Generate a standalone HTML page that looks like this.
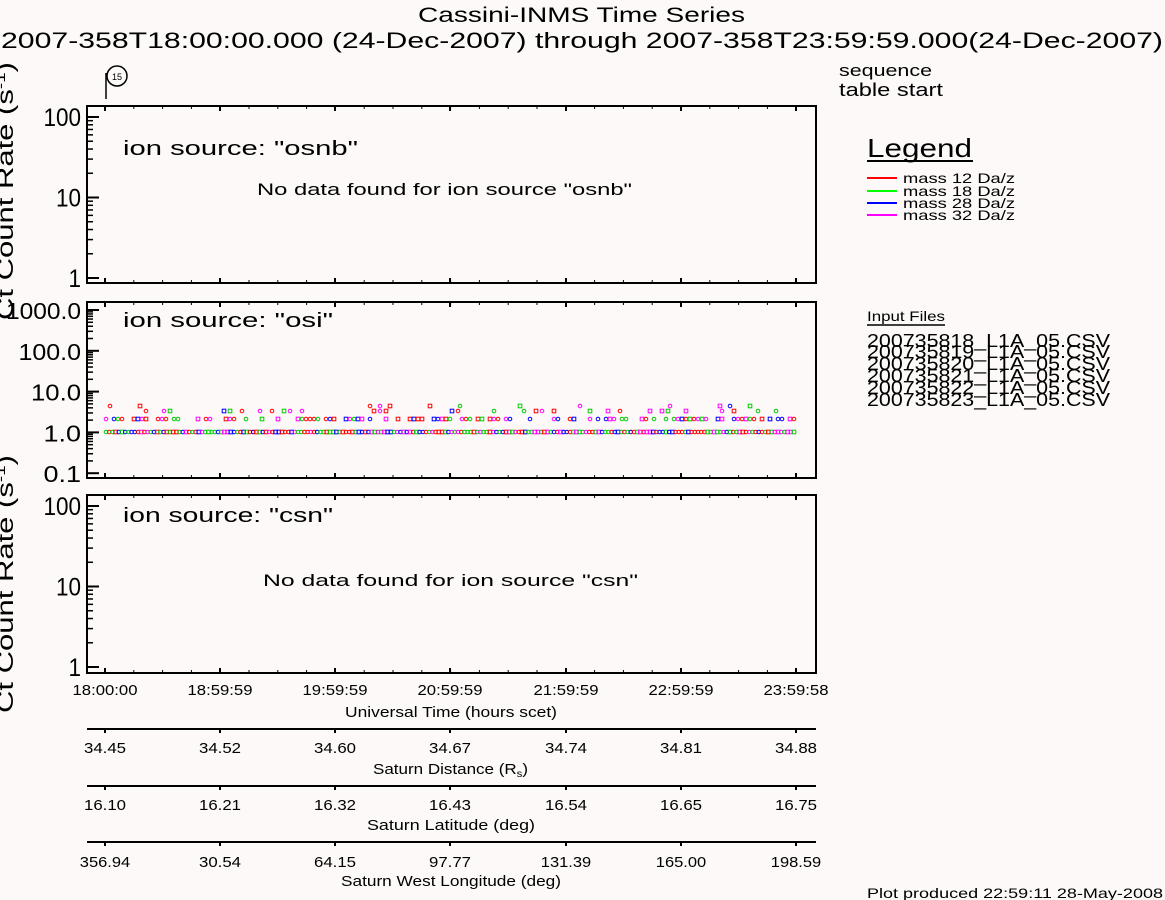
<!DOCTYPE html>
<html><head><meta charset="utf-8"><style>
html,body{margin:0;padding:0;background:#fcf9f8;}
svg{display:block;font-family:"Liberation Sans",sans-serif;}
</style></head><body>
<svg id="s" width="1165" height="900" xmlns="http://www.w3.org/2000/svg">
<rect width="1165" height="900" fill="#fcf9f8"/>
<text x="418" y="22" font-size="21" textLength="327" lengthAdjust="spacingAndGlyphs">Cassini-INMS Time Series</text>
<text x="1" y="48" font-size="22" textLength="1162" lengthAdjust="spacingAndGlyphs">2007-358T18:00:00.000 (24-Dec-2007) through 2007-358T23:59:59.000(24-Dec-2007)</text>
<text transform="translate(13,320) rotate(-90)" font-size="23" textLength="258" lengthAdjust="spacingAndGlyphs">Ct Count Rate (s<tspan dy="-8" font-size="14">-1</tspan><tspan dy="8">)</tspan></text>
<text transform="translate(13,713) rotate(-90)" font-size="23" textLength="258" lengthAdjust="spacingAndGlyphs">Ct Count Rate (s<tspan dy="-8" font-size="14">-1</tspan><tspan dy="8">)</tspan></text>
<line x1="106" y1="99" x2="106" y2="73" stroke="#000" stroke-width="1.5"/>
<circle cx="117" cy="76" r="10" fill="none" stroke="#000" stroke-width="1.5"/>
<text x="117" y="80" font-size="9" text-anchor="middle">15</text>
<text x="839" y="76" font-size="17" textLength="93" lengthAdjust="spacingAndGlyphs">sequence</text>
<text x="839" y="96" font-size="18" textLength="104" lengthAdjust="spacingAndGlyphs">table start</text>
<text x="867" y="157" font-size="26" textLength="105" lengthAdjust="spacingAndGlyphs">Legend</text>
<line x1="867" y1="161" x2="973" y2="161" stroke="#000" stroke-width="2"/>
<g font-size="14">
<line x1="867" y1="178" x2="897" y2="178" stroke="#f00" stroke-width="2"/><text x="903" y="183" textLength="112" lengthAdjust="spacingAndGlyphs">mass 12 Da/z</text>
<line x1="867" y1="191" x2="897" y2="191" stroke="#0f0" stroke-width="2"/><text x="903" y="196" textLength="112" lengthAdjust="spacingAndGlyphs">mass 18 Da/z</text>
<line x1="867" y1="203" x2="897" y2="203" stroke="#00f" stroke-width="2"/><text x="903" y="208" textLength="112" lengthAdjust="spacingAndGlyphs">mass 28 Da/z</text>
<line x1="867" y1="215" x2="897" y2="215" stroke="#f0f" stroke-width="2"/><text x="903" y="220" textLength="112" lengthAdjust="spacingAndGlyphs">mass 32 Da/z</text>
</g>
<text x="867" y="321" font-size="14" textLength="78" lengthAdjust="spacingAndGlyphs">Input Files</text>
<line x1="867" y1="325" x2="945" y2="325" stroke="#000" stroke-width="1.5"/>
<g font-size="18">
<text x="867" y="347" textLength="243" lengthAdjust="spacingAndGlyphs">200735818_L1A_05.CSV</text>
<text x="867" y="358" textLength="243" lengthAdjust="spacingAndGlyphs">200735819_L1A_05.CSV</text>
<text x="867" y="370" textLength="243" lengthAdjust="spacingAndGlyphs">200735820_L1A_05.CSV</text>
<text x="867" y="382" textLength="243" lengthAdjust="spacingAndGlyphs">200735821_L1A_05.CSV</text>
<text x="867" y="394" textLength="243" lengthAdjust="spacingAndGlyphs">200735822_L1A_05.CSV</text>
<text x="867" y="406" textLength="243" lengthAdjust="spacingAndGlyphs">200735823_L1A_05.CSV</text>
</g>
<g id="plots"></g>
<g stroke="#000" stroke-width="2">
<line x1="87" y1="729" x2="816" y2="729"/><line x1="87" y1="786" x2="816" y2="786"/><line x1="87" y1="842" x2="816" y2="842"/>
</g>
<g id="ax"></g>
<text x="373" y="774" font-size="15" textLength="155" lengthAdjust="spacingAndGlyphs">Saturn Distance (R<tspan font-size="10" dy="3">s</tspan><tspan dy="-3">)</tspan></text>
<text x="1163" y="898" font-size="14" text-anchor="end" textLength="296" lengthAdjust="spacingAndGlyphs">Plot produced 22:59:11 28-May-2008</text>
</svg>
<script>
var NS="http://www.w3.org/2000/svg",g=document.getElementById("plots");
function el(t,a,p){var e=document.createElementNS(NS,t);for(var k in a)e.setAttribute(k,a[k]);(p||g).appendChild(e);return e;}
function txt(x,y,s,sz,anc,len,p){var a={x:x,y:y,"font-size":sz,"text-anchor":anc||"start"};if(len){a.textLength=len;a.lengthAdjust="spacingAndGlyphs";}var e=el("text",a,p);e.textContent=s;return e;}
var X0=87,X1=816,hx=[105,220,335,450,566,681,796];
function frame(y0,y1){
 el("rect",{x:X0,y:y0,width:X1-X0,height:y1-y0,fill:"none",stroke:"#000","stroke-width":2});
 for(var i=0;i<hx.length;i++){el("line",{x1:hx[i],y1:y0,x2:hx[i],y2:y0+5,stroke:"#000","stroke-width":2});el("line",{x1:hx[i],y1:y1,x2:hx[i],y2:y1-5,stroke:"#000","stroke-width":2});}
 for(var x=105;x<=800;x+=28.8){el("line",{x1:x,y1:y0,x2:x,y2:y0+3,stroke:"#000"});el("line",{x1:x,y1:y1,x2:x,y2:y1-3,stroke:"#000"});}
}
function logax(ytop,per,n,labels,sz){
 for(var d=0;d<n;d++){var yb=ytop+per*(d+1);
  for(var m=1;m<10;m++){var y=yb-per*Math.log10(m);el("line",{x1:X0,y1:y,x2:X0+(m==1?12:6),y2:y,stroke:"#000","stroke-width":m==1?2:1.5});}}
 el("line",{x1:X0,y1:ytop,x2:X0+12,y2:ytop,stroke:"#000","stroke-width":2});
 for(var i=0;i<labels.length;i++){var L=labels[i];txt(X0-6,ytop+per*i+9,L,sz,"end",L.length*12.5);}
}
frame(106,283);logax(117,80.5,2,["100","10","1"],25);
txt(123,155,'ion source: "osnb"',20,"start",235);txt(257,195,'No data found for ion source "osnb"',17,"start",375);
frame(302,478);logax(310,40.8,4,["1000.0","100.0","10.0","1.0","0.1"],23);
txt(123,327,'ion source: "osi"',20,"start",210);
frame(495,673);logax(506,80.5,2,["100","10","1"],25);
txt(123,522,'ion source: "csn"',20,"start",210);txt(263,586,'No data found for ion source "csn"',17,"start",375);
var cols=["#f00","#0c0","#00f","#f0f"],seed=7;function r(){seed=(seed*9301+49297)%233280;return seed/233280;}
function pt(x,y,c){if(r()<0.6)el("circle",{cx:x,cy:y,r:1.8,fill:"none",stroke:c,"stroke-width":1});else el("rect",{x:x-1.8,y:y-1.8,width:3.6,height:3.6,fill:"none",stroke:c,"stroke-width":1});}
for(var x=106;x<796;x+=3.2)pt(x,432,cols[Math.floor(r()*4)]);
for(var x=106;x<796;x+=4){if(r()<0.55)pt(x,419,cols[Math.floor(r()*4)]);}
for(var x=110;x<796;x+=6){if(r()<0.25)pt(x,411,cols[Math.floor(r()*4)]);}
for(var x=110;x<796;x+=10){if(r()<0.15)pt(x,406,cols[Math.floor(r()*4)]);}
var ax=document.getElementById("ax");
var rows=[[695,["18:00:00","18:59:59","19:59:59","20:59:59","21:59:59","22:59:59","23:59:58"],65],
[753,["34.45","34.52","34.60","34.67","34.74","34.81","34.88"],42],
[810,["16.10","16.21","16.32","16.43","16.54","16.65","16.75"],42],
[867,["356.94","30.54","64.15","97.77","131.39","165.00","198.59"],0]];
rows.forEach(function(rw){rw[1].forEach(function(s,i){txt(hx[i],rw[0],s,15,"middle",rw[2]||s.length*8.4,ax);});});
[729,786,842].forEach(function(y){hx.forEach(function(x){el("line",{x1:x,y1:y,x2:x,y2:y+4,stroke:"#000","stroke-width":2},ax);});});
txt(451,717,"Universal Time (hours scet)",15,"middle",212,ax);
txt(451,830,"Saturn Latitude (deg)",15,"middle",168,ax);
txt(451,886,"Saturn West Longitude (deg)",15,"middle",220,ax);
</script>
</body></html>
